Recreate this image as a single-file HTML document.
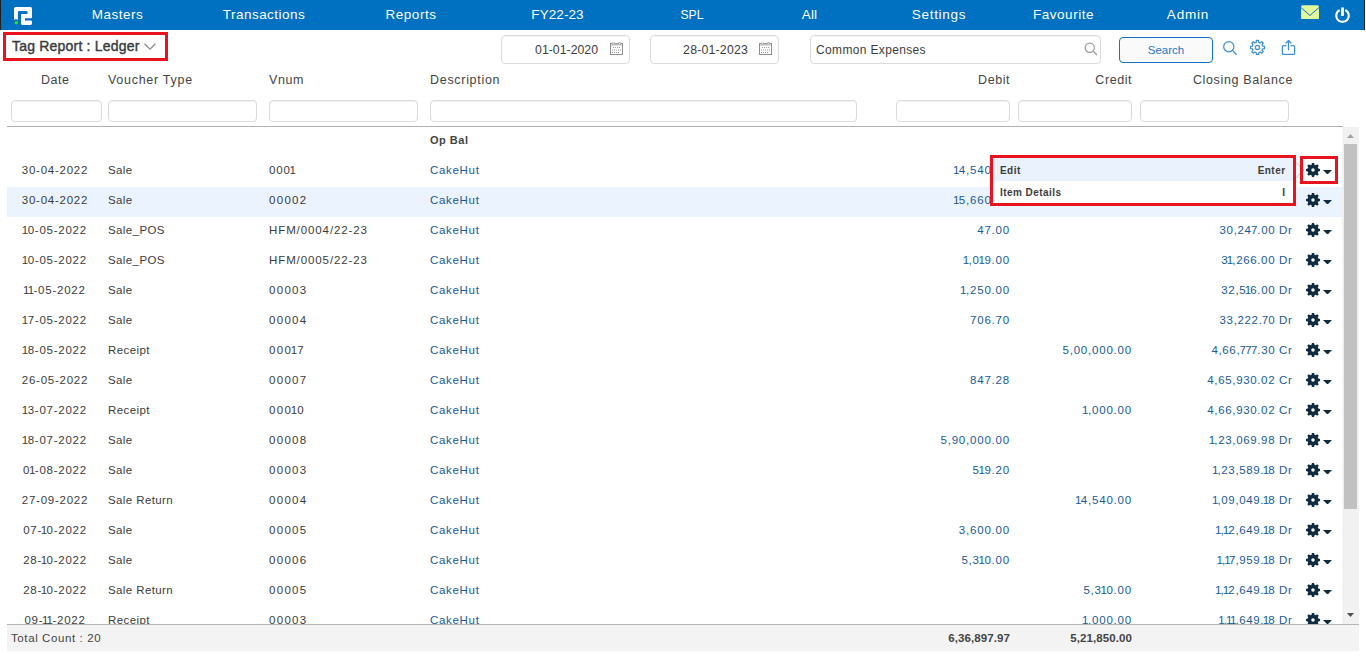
<!DOCTYPE html>
<html lang="en">
<head>
<meta charset="utf-8">
<title>Tag Report : Ledger</title>
<style>
*{box-sizing:border-box;margin:0;padding:0}
html,body{width:1366px;height:657px;overflow:hidden;background:#fff}
body{position:relative;font-family:"Liberation Sans",sans-serif;color:#3a3a3a;font-size:11.5px}
.abs{position:absolute}
#nav{position:absolute;left:0;top:0;width:1365px;height:30px;background:#0070c0;border-left:1px solid #222;border-right:1px solid #222}
#nav .mi{position:absolute;top:0;height:30px;line-height:30px;width:200px;text-align:center;color:#fff;font-size:13.5px;letter-spacing:.5px;white-space:nowrap}
#title{position:absolute;left:12px;top:36px;height:20px;line-height:20px;font-size:14px;color:#3b3b3b;letter-spacing:.2px;white-space:nowrap;-webkit-text-stroke:.4px #3b3b3b}
.red{position:absolute;border:3px solid #e8131f;pointer-events:none}
.inp{position:absolute;border:1px solid #dcdcdc;border-radius:4px;background:#fff;box-shadow:inset 0 1px 1px rgba(0,0,0,.06)}
.dt{font-size:12.3px;color:#3c3c3c;line-height:29px;white-space:nowrap}
.hd{position:absolute;top:72px;height:16px;line-height:16px;font-size:12.5px;letter-spacing:.55px;color:#444;white-space:nowrap}
.row{position:absolute;left:7px;width:1335px;height:30px}
.row.hl{background:#ebf3fe}
.c{position:absolute;top:0;height:30px;line-height:27px;white-space:nowrap;letter-spacing:.75px;font-size:11.5px;color:#3c3c3c}
.b{color:#185b97}
.cd{left:0;width:96px;text-align:center}
.ct{left:101px;letter-spacing:.4px}
.cv{left:262px;letter-spacing:.9px}
.cdesc{left:423px;letter-spacing:.68px}
.cdb{right:332px;text-align:right;letter-spacing:.8px}
.ccr{right:210px;text-align:right;letter-spacing:.8px}
.ccl{right:49.500px;text-align:right;letter-spacing:.65px}
.c i{font-style:normal;margin:0 -1.3px}
.ccl i{margin:0 -1.55px}
.ccl u{text-decoration:none;margin:0 -.7px}
.cv.n{letter-spacing:1.3px}
.gear{position:absolute;left:1299px;top:6px;width:14px;height:14px}
.caret{position:absolute;left:1316px;top:12.700px;width:9px;height:4.600px}
#foot{position:absolute;left:7px;top:624px;width:1352px;height:27px;background:#f3f3f3;border-top:1px solid #b5b5b5}
#foot span{position:absolute;top:0;line-height:26px;font-size:11.5px;letter-spacing:.6px;color:#444;white-space:nowrap}
#sb{position:absolute;left:1342px;top:127px;width:17px;height:497px;background:#f1f1f1}
#sb .th{position:absolute;left:2px;top:17px;width:13px;height:365px;background:#c1c1c1}
#pop{position:absolute;left:993px;top:158px;width:300px;height:45px;background:#fff}
#pop div{position:absolute;left:0;width:300px;height:23px;line-height:23px;font-size:10px;font-weight:bold;color:#3c3c3c;letter-spacing:.45px;white-space:nowrap}
#pop span{position:absolute}
</style>
</head>
<body>
<div id="nav">
  <svg class="abs" style="left:13px;top:7px" width="19" height="18" viewBox="0 0 19 18"><path fill="#fff" d="M1.5 0H16.5A1.5 1.5 0 0 1 18 1.5V9.900A1.300 1.300 0 0 1 16.700 11.200H11V13.600H16.700A1.300 1.300 0 0 1 18 14.900V16.500A1.400 1.400 0 0 1 16.600 17.900H8.400A1.400 1.400 0 0 1 7 16.500V8.300A1.400 1.400 0 0 1 8.400 6.900H12.300A1.500 1.500 0 0 0 12.300 3.900H5.200A1.300 1.300 0 0 0 3.900 5.200V13L1.950 11.900 0 13V1.500A1.500 1.500 0 0 1 1.500 0Z"/><circle cx="2.250" cy="15.800" r="1.750" fill="#41d62a"/></svg>
  <div class="mi" style="left:16.500px;letter-spacing:0.5px">Masters</div>
  <div class="mi" style="left:163px;letter-spacing:0.47px">Transactions</div>
  <div class="mi" style="left:310px;letter-spacing:0.53px">Reports</div>
  <div class="mi" style="left:456.500px;letter-spacing:0.08px">FY22-23</div>
  <div class="mi" style="left:591px;letter-spacing:0;transform:scaleX(.9)">SPL</div>
  <div class="mi" style="left:708.500px;letter-spacing:0.2px">All</div>
  <div class="mi" style="left:838px;letter-spacing:0.7px">Settings</div>
  <div class="mi" style="left:962.500px;letter-spacing:0.55px">Favourite</div>
  <div class="mi" style="left:1087px;letter-spacing:0.8px">Admin</div>
  <svg class="abs" style="left:1300px;top:5px" width="18" height="14.300" viewBox="0 0 18 14.300"><rect y=".3" width="18" height="14" rx="1.500" fill="#e2f89c"/><path d="M0 2.600L9 10.500 18 2.600" fill="none" stroke="#1a6fc4" stroke-width="1"/></svg>
  <svg class="abs" style="left:1333px;top:6.500px" width="17" height="17" viewBox="0 0 17 17"><path d="M5.700 3A6.300 6.300 0 1 0 11.300 3" fill="none" stroke="#fff" stroke-width="2.200" stroke-linecap="butt"/><rect x="7.100" y="0.500" width="2.800" height="8.500" fill="#fff"/></svg>
</div>

<div id="title">Tag Report : Ledger</div>
<svg class="abs" style="left:144.300px;top:43.200px" width="12" height="8" viewBox="0 0 12 8"><path d="M.6 .8L6 6.200 11.400 .8" fill="none" stroke="#8a8a8a" stroke-width="1.300"/></svg>
<div class="red" style="left:3px;top:32px;width:165px;height:29px"></div>

<div class="inp dt" style="left:501px;top:35px;width:129px;height:29px"><span class="abs" style="right:31px;top:0">01-01-2020</span><svg class="abs" style="left:108px;top:6px" width="13" height="13" viewBox="0 0 13 13"><rect x=".5" y="1.500" width="12" height="11" fill="#fff" stroke="#8e8e8e"/><rect x="1" y="2" width="11" height="2" fill="#dcdcdc"/><rect x="2" y="1.300" width="9" height="1.300" fill="#a6a6a6"/><rect x="2.500" y="0" width="1.600" height="2.300" fill="#e6e6e6" stroke="#aaa" stroke-width=".4"/><rect x="8.900" y="0" width="1.600" height="2.300" fill="#e6e6e6" stroke="#aaa" stroke-width=".4"/><path d="M3 5.500h8M2 8h9M2 10.500h7" stroke="#9a9a9a" stroke-width="1" stroke-dasharray="1 1"/></svg></div>
<div class="inp dt" style="left:650px;top:35px;width:129px;height:29px"><span class="abs" style="right:30px;top:0;letter-spacing:.2px">28-01-2023</span><svg class="abs" style="left:108px;top:6px" width="13" height="13" viewBox="0 0 13 13"><rect x=".5" y="1.500" width="12" height="11" fill="#fff" stroke="#8e8e8e"/><rect x="1" y="2" width="11" height="2" fill="#dcdcdc"/><rect x="2" y="1.300" width="9" height="1.300" fill="#a6a6a6"/><rect x="2.500" y="0" width="1.600" height="2.300" fill="#e6e6e6" stroke="#aaa" stroke-width=".4"/><rect x="8.900" y="0" width="1.600" height="2.300" fill="#e6e6e6" stroke="#aaa" stroke-width=".4"/><path d="M3 5.500h8M2 8h9M2 10.500h7" stroke="#9a9a9a" stroke-width="1" stroke-dasharray="1 1"/></svg></div>
<div class="inp dt" style="left:810px;top:35px;width:291px;height:29px"><span class="abs" style="left:5px;top:0;font-size:12px;letter-spacing:.35px">Common Expenses</span>
  <svg class="abs" style="left:273px;top:6px" width="14" height="14" viewBox="0 0 14 14"><circle cx="5.700" cy="5.700" r="4.600" fill="none" stroke="#999" stroke-width="1.200"/><path d="M9 9l4 4" stroke="#999" stroke-width="1.300"/></svg>
</div>
<div class="abs" style="left:1119px;top:37px;width:94px;height:26px;border:1px solid #1473c6;border-radius:4px;background:#fafafa;text-align:center;line-height:24px;font-size:11.500px;color:#1f76c9">Search</div>

<svg class="abs" style="left:1222px;top:39px" width="76" height="18" viewBox="1222 39 76 18" fill="none" stroke="#3d8fd6" stroke-width="1.250" stroke-linejoin="round" stroke-linecap="round"><circle cx="1228.800" cy="46.700" r="5.100"/><path d="M1232.500 50.400L1236.200 54.500"/><path d="M1256.19 42.31 L1256.44 40.43 L1258.56 40.43 L1258.81 42.31 L1260.20 42.89 L1261.71 41.74 L1263.21 43.24 L1262.06 44.75 L1262.64 46.14 L1264.52 46.39 L1264.52 48.51 L1262.64 48.76 L1262.06 50.15 L1263.21 51.66 L1261.71 53.16 L1260.20 52.01 L1258.81 52.59 L1258.56 54.47 L1256.44 54.47 L1256.19 52.59 L1254.80 52.01 L1253.29 53.16 L1251.79 51.66 L1252.94 50.15 L1252.36 48.76 L1250.48 48.51 L1250.48 46.39 L1252.36 46.14 L1252.94 44.75 L1251.79 43.24 L1253.29 41.74 L1254.80 42.89Z"/><circle cx="1257.500" cy="47.450" r="2.100"/><path d="M1286 45.700H1283.400A1 1 0 0 0 1282.400 46.700V53.400A1 1 0 0 0 1283.400 54.400H1293.600A1 1 0 0 0 1294.600 53.400V46.700A1 1 0 0 0 1293.600 45.700H1291"/><path d="M1288.500 49.800V40.600M1286 43L1288.500 40.500 1291 43"/></svg>
<div class="hd" style="left:41px">Date</div>
<div class="hd" style="left:108px;letter-spacing:.72px">Voucher Type</div>
<div class="hd" style="left:269px">Vnum</div>
<div class="hd" style="left:430px;letter-spacing:.7px">Description</div>
<div class="hd" style="right:356px">Debit</div>
<div class="hd" style="right:234px">Credit</div>
<div class="hd" style="right:73px;letter-spacing:.65px">Closing Balance</div>

<div class="inp" style="left:11px;top:100px;width:91px;height:22px"></div>
<div class="inp" style="left:108px;top:100px;width:149px;height:22px"></div>
<div class="inp" style="left:269px;top:100px;width:149px;height:22px"></div>
<div class="inp" style="left:430px;top:100px;width:427px;height:22px"></div>
<div class="inp" style="left:896px;top:100px;width:114px;height:22px"></div>
<div class="inp" style="left:1018px;top:100px;width:114px;height:22px"></div>
<div class="inp" style="left:1140px;top:100px;width:149px;height:22px"></div>
<div class="abs" style="left:7px;top:126px;width:1336px;height:1px;background:#b0b0b0"></div>

<div class="row" style="top:127px"><span class="c cdesc" style="font-weight:bold;color:#444;letter-spacing:.5px;font-size:11px">Op Bal</span></div>
<div class="row" style="top:157px"><span class="c cd">30-04-2022</span><span class="c ct">Sale</span><span class="c cv">000<i>1</i></span><span class="c cdesc b">CakeHut</span><span class="c cdb b"><i>1</i>4,540.00</span><span class="c ccr b"></span><span class="c ccl b"><i>1</i>4,540.00 Dr</span><svg class="gear" viewBox="0 0 14 14"><path fill="#0f2b40" fill-rule="evenodd" d="M5.59 1.68 L5.90 -0.01 L8.10 -0.01 L8.41 1.68 L9.76 2.24 L11.19 1.26 L12.74 2.81 L11.76 4.24 L12.32 5.59 L14.01 5.90 L14.01 8.10 L12.32 8.41 L11.76 9.76 L12.74 11.19 L11.19 12.74 L9.76 11.76 L8.41 12.32 L8.10 14.01 L5.90 14.01 L5.59 12.32 L4.24 11.76 L2.81 12.74 L1.26 11.19 L2.24 9.76 L1.68 8.41 L-0.01 8.10 L-0.01 5.90 L1.68 5.59 L2.24 4.24 L1.26 2.81 L2.81 1.26 L4.24 2.24ZM5.25 7.00a1.75 1.75 0 1 0 3.5 0a1.75 1.75 0 1 0 -3.5 0z"/></svg><svg class="caret" viewBox="0 0 9 4.600"><path d="M0 0H9L4.500 4.600z" fill="#0f2b40"/></svg></div>
<div class="row hl" style="top:187px"><span class="c cd">30-04-2022</span><span class="c ct">Sale</span><span class="c cv n">00002</span><span class="c cdesc b">CakeHut</span><span class="c cdb b"><i>1</i>5,660.00</span><span class="c ccr b"></span><span class="c ccl b">30,200.00 Dr</span><svg class="gear" viewBox="0 0 14 14"><path fill="#0f2b40" fill-rule="evenodd" d="M5.59 1.68 L5.90 -0.01 L8.10 -0.01 L8.41 1.68 L9.76 2.24 L11.19 1.26 L12.74 2.81 L11.76 4.24 L12.32 5.59 L14.01 5.90 L14.01 8.10 L12.32 8.41 L11.76 9.76 L12.74 11.19 L11.19 12.74 L9.76 11.76 L8.41 12.32 L8.10 14.01 L5.90 14.01 L5.59 12.32 L4.24 11.76 L2.81 12.74 L1.26 11.19 L2.24 9.76 L1.68 8.41 L-0.01 8.10 L-0.01 5.90 L1.68 5.59 L2.24 4.24 L1.26 2.81 L2.81 1.26 L4.24 2.24ZM5.25 7.00a1.75 1.75 0 1 0 3.5 0a1.75 1.75 0 1 0 -3.5 0z"/></svg><svg class="caret" viewBox="0 0 9 4.600"><path d="M0 0H9L4.500 4.600z" fill="#0f2b40"/></svg></div>
<div class="row" style="top:217px"><span class="c cd"><i>1</i>0-05-2022</span><span class="c ct">Sale_POS</span><span class="c cv">HFM/0004/22-23</span><span class="c cdesc b">CakeHut</span><span class="c cdb b">47.00</span><span class="c ccr b"></span><span class="c ccl b">30,24<u>7</u>.00 Dr</span><svg class="gear" viewBox="0 0 14 14"><path fill="#0f2b40" fill-rule="evenodd" d="M5.59 1.68 L5.90 -0.01 L8.10 -0.01 L8.41 1.68 L9.76 2.24 L11.19 1.26 L12.74 2.81 L11.76 4.24 L12.32 5.59 L14.01 5.90 L14.01 8.10 L12.32 8.41 L11.76 9.76 L12.74 11.19 L11.19 12.74 L9.76 11.76 L8.41 12.32 L8.10 14.01 L5.90 14.01 L5.59 12.32 L4.24 11.76 L2.81 12.74 L1.26 11.19 L2.24 9.76 L1.68 8.41 L-0.01 8.10 L-0.01 5.90 L1.68 5.59 L2.24 4.24 L1.26 2.81 L2.81 1.26 L4.24 2.24ZM5.25 7.00a1.75 1.75 0 1 0 3.5 0a1.75 1.75 0 1 0 -3.5 0z"/></svg><svg class="caret" viewBox="0 0 9 4.600"><path d="M0 0H9L4.500 4.600z" fill="#0f2b40"/></svg></div>
<div class="row" style="top:247px"><span class="c cd"><i>1</i>0-05-2022</span><span class="c ct">Sale_POS</span><span class="c cv">HFM/0005/22-23</span><span class="c cdesc b">CakeHut</span><span class="c cdb b"><i>1</i>,0<i>1</i>9.00</span><span class="c ccr b"></span><span class="c ccl b">3<i>1</i>,266.00 Dr</span><svg class="gear" viewBox="0 0 14 14"><path fill="#0f2b40" fill-rule="evenodd" d="M5.59 1.68 L5.90 -0.01 L8.10 -0.01 L8.41 1.68 L9.76 2.24 L11.19 1.26 L12.74 2.81 L11.76 4.24 L12.32 5.59 L14.01 5.90 L14.01 8.10 L12.32 8.41 L11.76 9.76 L12.74 11.19 L11.19 12.74 L9.76 11.76 L8.41 12.32 L8.10 14.01 L5.90 14.01 L5.59 12.32 L4.24 11.76 L2.81 12.74 L1.26 11.19 L2.24 9.76 L1.68 8.41 L-0.01 8.10 L-0.01 5.90 L1.68 5.59 L2.24 4.24 L1.26 2.81 L2.81 1.26 L4.24 2.24ZM5.25 7.00a1.75 1.75 0 1 0 3.5 0a1.75 1.75 0 1 0 -3.5 0z"/></svg><svg class="caret" viewBox="0 0 9 4.600"><path d="M0 0H9L4.500 4.600z" fill="#0f2b40"/></svg></div>
<div class="row" style="top:277px"><span class="c cd"><i>1</i><i>1</i>-05-2022</span><span class="c ct">Sale</span><span class="c cv n">00003</span><span class="c cdesc b">CakeHut</span><span class="c cdb b"><i>1</i>,250.00</span><span class="c ccr b"></span><span class="c ccl b">32,5<i>1</i>6.00 Dr</span><svg class="gear" viewBox="0 0 14 14"><path fill="#0f2b40" fill-rule="evenodd" d="M5.59 1.68 L5.90 -0.01 L8.10 -0.01 L8.41 1.68 L9.76 2.24 L11.19 1.26 L12.74 2.81 L11.76 4.24 L12.32 5.59 L14.01 5.90 L14.01 8.10 L12.32 8.41 L11.76 9.76 L12.74 11.19 L11.19 12.74 L9.76 11.76 L8.41 12.32 L8.10 14.01 L5.90 14.01 L5.59 12.32 L4.24 11.76 L2.81 12.74 L1.26 11.19 L2.24 9.76 L1.68 8.41 L-0.01 8.10 L-0.01 5.90 L1.68 5.59 L2.24 4.24 L1.26 2.81 L2.81 1.26 L4.24 2.24ZM5.25 7.00a1.75 1.75 0 1 0 3.5 0a1.75 1.75 0 1 0 -3.5 0z"/></svg><svg class="caret" viewBox="0 0 9 4.600"><path d="M0 0H9L4.500 4.600z" fill="#0f2b40"/></svg></div>
<div class="row" style="top:307px"><span class="c cd"><i>1</i>7-05-2022</span><span class="c ct">Sale</span><span class="c cv n">00004</span><span class="c cdesc b">CakeHut</span><span class="c cdb b">706.70</span><span class="c ccr b"></span><span class="c ccl b">33,222.<u>7</u>0 Dr</span><svg class="gear" viewBox="0 0 14 14"><path fill="#0f2b40" fill-rule="evenodd" d="M5.59 1.68 L5.90 -0.01 L8.10 -0.01 L8.41 1.68 L9.76 2.24 L11.19 1.26 L12.74 2.81 L11.76 4.24 L12.32 5.59 L14.01 5.90 L14.01 8.10 L12.32 8.41 L11.76 9.76 L12.74 11.19 L11.19 12.74 L9.76 11.76 L8.41 12.32 L8.10 14.01 L5.90 14.01 L5.59 12.32 L4.24 11.76 L2.81 12.74 L1.26 11.19 L2.24 9.76 L1.68 8.41 L-0.01 8.10 L-0.01 5.90 L1.68 5.59 L2.24 4.24 L1.26 2.81 L2.81 1.26 L4.24 2.24ZM5.25 7.00a1.75 1.75 0 1 0 3.5 0a1.75 1.75 0 1 0 -3.5 0z"/></svg><svg class="caret" viewBox="0 0 9 4.600"><path d="M0 0H9L4.500 4.600z" fill="#0f2b40"/></svg></div>
<div class="row" style="top:337px"><span class="c cd"><i>1</i>8-05-2022</span><span class="c ct">Receipt</span><span class="c cv n">000<i>1</i>7</span><span class="c cdesc b">CakeHut</span><span class="c cdb b"></span><span class="c ccr b">5,00,000.00</span><span class="c ccl b">4,66,<u>7</u><u>7</u><u>7</u>.30 Cr</span><svg class="gear" viewBox="0 0 14 14"><path fill="#0f2b40" fill-rule="evenodd" d="M5.59 1.68 L5.90 -0.01 L8.10 -0.01 L8.41 1.68 L9.76 2.24 L11.19 1.26 L12.74 2.81 L11.76 4.24 L12.32 5.59 L14.01 5.90 L14.01 8.10 L12.32 8.41 L11.76 9.76 L12.74 11.19 L11.19 12.74 L9.76 11.76 L8.41 12.32 L8.10 14.01 L5.90 14.01 L5.59 12.32 L4.24 11.76 L2.81 12.74 L1.26 11.19 L2.24 9.76 L1.68 8.41 L-0.01 8.10 L-0.01 5.90 L1.68 5.59 L2.24 4.24 L1.26 2.81 L2.81 1.26 L4.24 2.24ZM5.25 7.00a1.75 1.75 0 1 0 3.5 0a1.75 1.75 0 1 0 -3.5 0z"/></svg><svg class="caret" viewBox="0 0 9 4.600"><path d="M0 0H9L4.500 4.600z" fill="#0f2b40"/></svg></div>
<div class="row" style="top:367px"><span class="c cd">26-05-2022</span><span class="c ct">Sale</span><span class="c cv n">00007</span><span class="c cdesc b">CakeHut</span><span class="c cdb b">847.28</span><span class="c ccr b"></span><span class="c ccl b">4,65,930.02 Cr</span><svg class="gear" viewBox="0 0 14 14"><path fill="#0f2b40" fill-rule="evenodd" d="M5.59 1.68 L5.90 -0.01 L8.10 -0.01 L8.41 1.68 L9.76 2.24 L11.19 1.26 L12.74 2.81 L11.76 4.24 L12.32 5.59 L14.01 5.90 L14.01 8.10 L12.32 8.41 L11.76 9.76 L12.74 11.19 L11.19 12.74 L9.76 11.76 L8.41 12.32 L8.10 14.01 L5.90 14.01 L5.59 12.32 L4.24 11.76 L2.81 12.74 L1.26 11.19 L2.24 9.76 L1.68 8.41 L-0.01 8.10 L-0.01 5.90 L1.68 5.59 L2.24 4.24 L1.26 2.81 L2.81 1.26 L4.24 2.24ZM5.25 7.00a1.75 1.75 0 1 0 3.5 0a1.75 1.75 0 1 0 -3.5 0z"/></svg><svg class="caret" viewBox="0 0 9 4.600"><path d="M0 0H9L4.500 4.600z" fill="#0f2b40"/></svg></div>
<div class="row" style="top:397px"><span class="c cd"><i>1</i>3-07-2022</span><span class="c ct">Receipt</span><span class="c cv n">000<i>1</i>0</span><span class="c cdesc b">CakeHut</span><span class="c cdb b"></span><span class="c ccr b"><i>1</i>,000.00</span><span class="c ccl b">4,66,930.02 Cr</span><svg class="gear" viewBox="0 0 14 14"><path fill="#0f2b40" fill-rule="evenodd" d="M5.59 1.68 L5.90 -0.01 L8.10 -0.01 L8.41 1.68 L9.76 2.24 L11.19 1.26 L12.74 2.81 L11.76 4.24 L12.32 5.59 L14.01 5.90 L14.01 8.10 L12.32 8.41 L11.76 9.76 L12.74 11.19 L11.19 12.74 L9.76 11.76 L8.41 12.32 L8.10 14.01 L5.90 14.01 L5.59 12.32 L4.24 11.76 L2.81 12.74 L1.26 11.19 L2.24 9.76 L1.68 8.41 L-0.01 8.10 L-0.01 5.90 L1.68 5.59 L2.24 4.24 L1.26 2.81 L2.81 1.26 L4.24 2.24ZM5.25 7.00a1.75 1.75 0 1 0 3.5 0a1.75 1.75 0 1 0 -3.5 0z"/></svg><svg class="caret" viewBox="0 0 9 4.600"><path d="M0 0H9L4.500 4.600z" fill="#0f2b40"/></svg></div>
<div class="row" style="top:427px"><span class="c cd"><i>1</i>8-07-2022</span><span class="c ct">Sale</span><span class="c cv n">00008</span><span class="c cdesc b">CakeHut</span><span class="c cdb b">5,90,000.00</span><span class="c ccr b"></span><span class="c ccl b"><i>1</i>,23,069.98 Dr</span><svg class="gear" viewBox="0 0 14 14"><path fill="#0f2b40" fill-rule="evenodd" d="M5.59 1.68 L5.90 -0.01 L8.10 -0.01 L8.41 1.68 L9.76 2.24 L11.19 1.26 L12.74 2.81 L11.76 4.24 L12.32 5.59 L14.01 5.90 L14.01 8.10 L12.32 8.41 L11.76 9.76 L12.74 11.19 L11.19 12.74 L9.76 11.76 L8.41 12.32 L8.10 14.01 L5.90 14.01 L5.59 12.32 L4.24 11.76 L2.81 12.74 L1.26 11.19 L2.24 9.76 L1.68 8.41 L-0.01 8.10 L-0.01 5.90 L1.68 5.59 L2.24 4.24 L1.26 2.81 L2.81 1.26 L4.24 2.24ZM5.25 7.00a1.75 1.75 0 1 0 3.5 0a1.75 1.75 0 1 0 -3.5 0z"/></svg><svg class="caret" viewBox="0 0 9 4.600"><path d="M0 0H9L4.500 4.600z" fill="#0f2b40"/></svg></div>
<div class="row" style="top:457px"><span class="c cd">0<i>1</i>-08-2022</span><span class="c ct">Sale</span><span class="c cv n">00003</span><span class="c cdesc b">CakeHut</span><span class="c cdb b">5<i>1</i>9.20</span><span class="c ccr b"></span><span class="c ccl b"><i>1</i>,23,589.<i>1</i>8 Dr</span><svg class="gear" viewBox="0 0 14 14"><path fill="#0f2b40" fill-rule="evenodd" d="M5.59 1.68 L5.90 -0.01 L8.10 -0.01 L8.41 1.68 L9.76 2.24 L11.19 1.26 L12.74 2.81 L11.76 4.24 L12.32 5.59 L14.01 5.90 L14.01 8.10 L12.32 8.41 L11.76 9.76 L12.74 11.19 L11.19 12.74 L9.76 11.76 L8.41 12.32 L8.10 14.01 L5.90 14.01 L5.59 12.32 L4.24 11.76 L2.81 12.74 L1.26 11.19 L2.24 9.76 L1.68 8.41 L-0.01 8.10 L-0.01 5.90 L1.68 5.59 L2.24 4.24 L1.26 2.81 L2.81 1.26 L4.24 2.24ZM5.25 7.00a1.75 1.75 0 1 0 3.5 0a1.75 1.75 0 1 0 -3.5 0z"/></svg><svg class="caret" viewBox="0 0 9 4.600"><path d="M0 0H9L4.500 4.600z" fill="#0f2b40"/></svg></div>
<div class="row" style="top:487px"><span class="c cd">27-09-2022</span><span class="c ct">Sale Return</span><span class="c cv n">00004</span><span class="c cdesc b">CakeHut</span><span class="c cdb b"></span><span class="c ccr b"><i>1</i>4,540.00</span><span class="c ccl b"><i>1</i>,09,049.<i>1</i>8 Dr</span><svg class="gear" viewBox="0 0 14 14"><path fill="#0f2b40" fill-rule="evenodd" d="M5.59 1.68 L5.90 -0.01 L8.10 -0.01 L8.41 1.68 L9.76 2.24 L11.19 1.26 L12.74 2.81 L11.76 4.24 L12.32 5.59 L14.01 5.90 L14.01 8.10 L12.32 8.41 L11.76 9.76 L12.74 11.19 L11.19 12.74 L9.76 11.76 L8.41 12.32 L8.10 14.01 L5.90 14.01 L5.59 12.32 L4.24 11.76 L2.81 12.74 L1.26 11.19 L2.24 9.76 L1.68 8.41 L-0.01 8.10 L-0.01 5.90 L1.68 5.59 L2.24 4.24 L1.26 2.81 L2.81 1.26 L4.24 2.24ZM5.25 7.00a1.75 1.75 0 1 0 3.5 0a1.75 1.75 0 1 0 -3.5 0z"/></svg><svg class="caret" viewBox="0 0 9 4.600"><path d="M0 0H9L4.500 4.600z" fill="#0f2b40"/></svg></div>
<div class="row" style="top:517px"><span class="c cd">07-<i>1</i>0-2022</span><span class="c ct">Sale</span><span class="c cv n">00005</span><span class="c cdesc b">CakeHut</span><span class="c cdb b">3,600.00</span><span class="c ccr b"></span><span class="c ccl b"><i>1</i>,<i>1</i>2,649.<i>1</i>8 Dr</span><svg class="gear" viewBox="0 0 14 14"><path fill="#0f2b40" fill-rule="evenodd" d="M5.59 1.68 L5.90 -0.01 L8.10 -0.01 L8.41 1.68 L9.76 2.24 L11.19 1.26 L12.74 2.81 L11.76 4.24 L12.32 5.59 L14.01 5.90 L14.01 8.10 L12.32 8.41 L11.76 9.76 L12.74 11.19 L11.19 12.74 L9.76 11.76 L8.41 12.32 L8.10 14.01 L5.90 14.01 L5.59 12.32 L4.24 11.76 L2.81 12.74 L1.26 11.19 L2.24 9.76 L1.68 8.41 L-0.01 8.10 L-0.01 5.90 L1.68 5.59 L2.24 4.24 L1.26 2.81 L2.81 1.26 L4.24 2.24ZM5.25 7.00a1.75 1.75 0 1 0 3.5 0a1.75 1.75 0 1 0 -3.5 0z"/></svg><svg class="caret" viewBox="0 0 9 4.600"><path d="M0 0H9L4.500 4.600z" fill="#0f2b40"/></svg></div>
<div class="row" style="top:547px"><span class="c cd">28-<i>1</i>0-2022</span><span class="c ct">Sale</span><span class="c cv n">00006</span><span class="c cdesc b">CakeHut</span><span class="c cdb b">5,3<i>1</i>0.00</span><span class="c ccr b"></span><span class="c ccl b"><i>1</i>,<i>1</i><u>7</u>,959.<i>1</i>8 Dr</span><svg class="gear" viewBox="0 0 14 14"><path fill="#0f2b40" fill-rule="evenodd" d="M5.59 1.68 L5.90 -0.01 L8.10 -0.01 L8.41 1.68 L9.76 2.24 L11.19 1.26 L12.74 2.81 L11.76 4.24 L12.32 5.59 L14.01 5.90 L14.01 8.10 L12.32 8.41 L11.76 9.76 L12.74 11.19 L11.19 12.74 L9.76 11.76 L8.41 12.32 L8.10 14.01 L5.90 14.01 L5.59 12.32 L4.24 11.76 L2.81 12.74 L1.26 11.19 L2.24 9.76 L1.68 8.41 L-0.01 8.10 L-0.01 5.90 L1.68 5.59 L2.24 4.24 L1.26 2.81 L2.81 1.26 L4.24 2.24ZM5.25 7.00a1.75 1.75 0 1 0 3.5 0a1.75 1.75 0 1 0 -3.5 0z"/></svg><svg class="caret" viewBox="0 0 9 4.600"><path d="M0 0H9L4.500 4.600z" fill="#0f2b40"/></svg></div>
<div class="row" style="top:577px"><span class="c cd">28-<i>1</i>0-2022</span><span class="c ct">Sale Return</span><span class="c cv n">00005</span><span class="c cdesc b">CakeHut</span><span class="c cdb b"></span><span class="c ccr b">5,3<i>1</i>0.00</span><span class="c ccl b"><i>1</i>,<i>1</i>2,649.<i>1</i>8 Dr</span><svg class="gear" viewBox="0 0 14 14"><path fill="#0f2b40" fill-rule="evenodd" d="M5.59 1.68 L5.90 -0.01 L8.10 -0.01 L8.41 1.68 L9.76 2.24 L11.19 1.26 L12.74 2.81 L11.76 4.24 L12.32 5.59 L14.01 5.90 L14.01 8.10 L12.32 8.41 L11.76 9.76 L12.74 11.19 L11.19 12.74 L9.76 11.76 L8.41 12.32 L8.10 14.01 L5.90 14.01 L5.59 12.32 L4.24 11.76 L2.81 12.74 L1.26 11.19 L2.24 9.76 L1.68 8.41 L-0.01 8.10 L-0.01 5.90 L1.68 5.59 L2.24 4.24 L1.26 2.81 L2.81 1.26 L4.24 2.24ZM5.25 7.00a1.75 1.75 0 1 0 3.5 0a1.75 1.75 0 1 0 -3.5 0z"/></svg><svg class="caret" viewBox="0 0 9 4.600"><path d="M0 0H9L4.500 4.600z" fill="#0f2b40"/></svg></div>
<div class="row" style="top:607px"><span class="c cd">09-<i>1</i><i>1</i>-2022</span><span class="c ct">Receipt</span><span class="c cv n">00003</span><span class="c cdesc b">CakeHut</span><span class="c cdb b"></span><span class="c ccr b"><i>1</i>,000.00</span><span class="c ccl b"><i>1</i>,<i>1</i><i>1</i>,649.<i>1</i>8 Dr</span><svg class="gear" viewBox="0 0 14 14"><path fill="#0f2b40" fill-rule="evenodd" d="M5.59 1.68 L5.90 -0.01 L8.10 -0.01 L8.41 1.68 L9.76 2.24 L11.19 1.26 L12.74 2.81 L11.76 4.24 L12.32 5.59 L14.01 5.90 L14.01 8.10 L12.32 8.41 L11.76 9.76 L12.74 11.19 L11.19 12.74 L9.76 11.76 L8.41 12.32 L8.10 14.01 L5.90 14.01 L5.59 12.32 L4.24 11.76 L2.81 12.74 L1.26 11.19 L2.24 9.76 L1.68 8.41 L-0.01 8.10 L-0.01 5.90 L1.68 5.59 L2.24 4.24 L1.26 2.81 L2.81 1.26 L4.24 2.24ZM5.25 7.00a1.75 1.75 0 1 0 3.5 0a1.75 1.75 0 1 0 -3.5 0z"/></svg><svg class="caret" viewBox="0 0 9 4.600"><path d="M0 0H9L4.500 4.600z" fill="#0f2b40"/></svg></div>

<div id="sb"><div class="th"></div>
<svg class="abs" style="left:5px;top:7px" width="7" height="4" viewBox="0 0 7 4"><path d="M0 4L3.500 0 7 4z" fill="#a3a3a3"/></svg>
<svg class="abs" style="left:5px;top:486px" width="7" height="4" viewBox="0 0 7 4"><path d="M0 0L3.500 4 7 0z" fill="#505050"/></svg>
</div>

<div id="foot"><span style="left:4px">Total Count : 20</span><span style="right:349px;font-weight:bold;letter-spacing:.1px">6,36,897.97</span><span style="right:227px;font-weight:bold;letter-spacing:.1px">5,21,850.00</span></div>

<svg class="abs" style="left:1292px;top:157px" width="14" height="28" viewBox="1292 157 14 28"><path d="M1296 162.300L1303.700 170 1296 177.700" fill="none" stroke="#bdbdbd" stroke-width="1"/></svg>
<div id="pop">
  <div style="top:0;background:#eaf2fe"><span style="left:7px;top:1px">Edit</span><span style="right:7.500px;top:1px">Enter</span></div>
  <div style="top:23px"><span style="left:7px">Item Details</span><span style="right:7.500px">I</span></div>
</div>
<div class="red" style="left:990px;top:155px;width:306px;height:51px"></div>
<div class="red" style="left:1300px;top:156px;width:38px;height:28px"></div>
</body>
</html>
